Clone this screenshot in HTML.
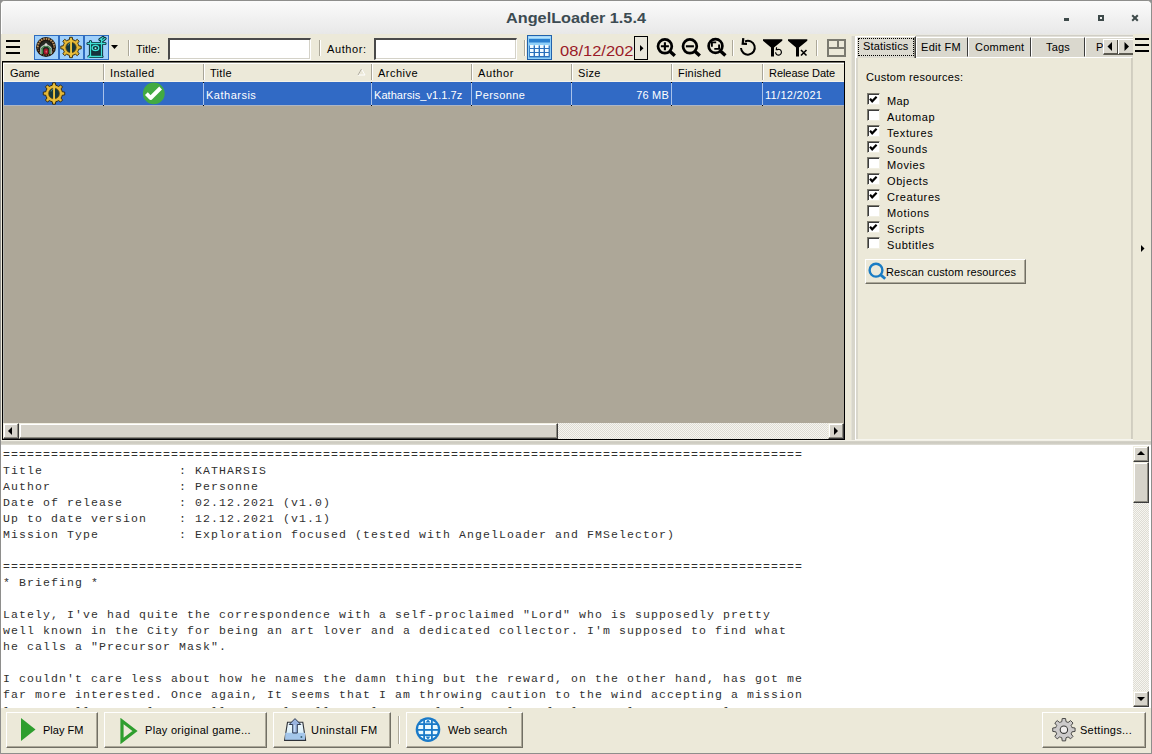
<!DOCTYPE html>
<html><head><meta charset="utf-8">
<style>
*{box-sizing:border-box;margin:0;padding:0}
html,body{width:1152px;height:754px;overflow:hidden;background:#8f8f8f}
body{position:relative;font-family:"Liberation Sans",sans-serif;font-size:11px;color:#000}
.a{position:absolute}
#frame{position:absolute;left:0;top:0;width:1152px;height:754px;background:#ece9d9;border-radius:5px 5px 0 0;border:1px solid #8e8e8c}
#title{position:absolute;left:1px;top:1px;width:1150px;height:33px;background:linear-gradient(#fbfbfb,#e8e8e8);border-radius:4px 4px 0 0;border-left:1px solid #fff}
#title .t{position:absolute;left:-1px;width:1150px;top:9px;text-align:center;font-weight:bold;font-size:14px;color:#3c4b52;transform:scaleX(1.16)}
.sep{position:absolute;width:2px;border-left:1px solid #aca899;border-right:1px solid #fff}
.tb{position:absolute;background:#fff;border-top:2px solid #4a4a4a;border-left:2px solid #4a4a4a;border-right:1px solid #fff;border-bottom:1px solid #fff;box-shadow:inset -1px -1px 0 #d4d2c8}
.ham i{position:absolute;left:0;width:14px;height:2px;background:#000}
.lbl{position:absolute;white-space:nowrap;line-height:13px}
.hd{position:absolute;top:63px;height:18px;line-height:20px;white-space:nowrap;padding-left:6px}
.hdv{position:absolute;top:64px;height:16px;width:1px;background:#a8a598;box-shadow:1px 0 0 #fff}
.cell{position:absolute;top:85px;height:21px;line-height:21px;color:#fff;white-space:nowrap;padding-left:3px}
.vl{position:absolute;top:82px;height:24px;width:1px;background:#a9c2ea;border-top:1px solid #000;border-bottom:1px solid #000}
.btn{position:absolute;background:#ece9d9;border:1px solid;border-color:#fff #716f64 #716f64 #fff;box-shadow:inset -1px -1px 0 #aca899}
.cb{position:absolute;left:867px;width:13px;height:12px;background:#fff;border:1px solid;border-color:#7e7c70 #f1efe2 #f1efe2 #7e7c70;box-shadow:inset 1px 1px 0 #3c3c3c}
.cbl{position:absolute;left:887px;white-space:nowrap;line-height:13px}
.tab{position:absolute;height:20px;background:#dad8ce;border:1px solid;border-color:#fff #3c3c3c transparent #fff;text-align:center;white-space:nowrap;line-height:17px}
.sb{position:absolute;background:#d6d3ca;border:1px solid;border-color:#f1efe2 #3c3c3c #3c3c3c #f1efe2;box-shadow:inset -1px -1px 0 #8c8a80, inset 1px 1px 0 #fff}
.chk{background-image:repeating-conic-gradient(#f6f5f0 0 25%, #dedcd4 0 50%);background-size:2px 2px}
#readme{position:absolute;left:1px;top:445px;width:1150px;height:263px;background:#fff;overflow:hidden}
#readme pre{position:absolute;left:2px;top:2px;font-family:"Liberation Mono",monospace;font-size:11.5px;letter-spacing:1.1px;line-height:16px;color:#303030}
.bb{position:absolute;top:712px;height:36px;background:#ece9d9;border:1px solid;border-color:#fff #716f64 #716f64 #fff;box-shadow:inset -1px -1px 0 #aca899}
.bb span{position:absolute;top:11px;white-space:nowrap;line-height:13px}
</style></head><body>
<div id="frame"></div>
<div id="title"><div class="t">AngelLoader 1.5.4</div>
  <div class="a" style="left:1062px;top:17px;width:5px;height:3px;background:#3e4a4a"></div>
  <div class="a" style="left:1096px;top:14px;width:6px;height:6px;border:2px solid #3e4a4a"></div>
  <svg class="a" style="left:1129px;top:13px" width="8" height="8"><path d="M1.2 1.2L6.8 6.8M6.8 1.2L1.2 6.8" stroke="#3e4a4a" stroke-width="2"/></svg>
</div>

<!-- ================= TOOLBAR ================= -->
<div class="a ham" style="left:6px;top:40px"><i style="top:0"></i><i style="top:6px"></i><i style="top:12px"></i></div>
<div class="a" style="left:34px;top:35px;width:75px;height:25px;background:#9fd0fb;border:1px solid #2f6cc0"></div>
<div class="a" style="left:58px;top:36px;width:2px;height:23px;background:#2f6cc0"></div>
<div class="a" style="left:83px;top:36px;width:2px;height:23px;background:#2f6cc0"></div>
<!-- thief1 medallion -->
<svg class="a" style="left:35px;top:36px" width="23" height="23" viewBox="0 0 23 23">
 <circle cx="11" cy="11" r="10" fill="#1c140e"/>
 <path d="M2.8 11A8.2 8.2 0 0 1 19.2 11" fill="none" stroke="#b8905c" stroke-width="2" stroke-dasharray="1.6 .9"/>
 <path d="M19.2 11A8.2 8.2 0 0 1 2.8 11" fill="none" stroke="#7a5a3a" stroke-width="1.6" stroke-dasharray="1.2 1.2"/>
 <circle cx="11" cy="11.5" r="6.4" fill="#262a24"/>
 <path d="M5.2 18V12Q11 4.5 16.8 12V18H14.6V12.5Q11 8.5 7.4 12.5V18Z" fill="#b4c0bc"/>
 <path d="M6.3 13Q11 7 15.7 13" fill="none" stroke="#3a8040" stroke-width="1.2"/>
 <rect x="6.4" y="13" width="1.5" height="5" fill="#3c8a46"/><rect x="14.1" y="13" width="1.5" height="5" fill="#3c8a46"/>
 <ellipse cx="11" cy="15.6" rx="2.2" ry="3" fill="#a8182a"/>
 <ellipse cx="11.3" cy="15.6" rx=".7" ry="1.2" fill="#d86a78"/>
 <circle cx="11" cy="8.6" r="1.3" fill="#e0dcd8"/>
</svg>
<!-- thief2 gear -->
<svg class="a" style="left:59px;top:36px" width="24" height="23" viewBox="0 0 24 23">
 <path d="M10.33 3.68 L10.66 1.29 L13.34 1.29 L13.67 3.68 L15.06 4.11 L16.35 4.79 L18.28 3.33 L20.17 5.22 L18.71 7.15 L19.39 8.44 L19.82 9.83 L22.21 10.16 L22.21 12.84 L19.82 13.17 L19.39 14.56 L18.71 15.85 L20.17 17.78 L18.28 19.67 L16.35 18.21 L15.06 18.89 L13.67 19.32 L13.34 21.71 L10.66 21.71 L10.33 19.32 L8.94 18.89 L7.65 18.21 L5.72 19.67 L3.83 17.78 L5.29 15.85 L4.61 14.56 L4.18 13.17 L1.79 12.84 L1.79 10.16 L4.18 9.83 L4.61 8.44 L5.29 7.15 L3.83 5.22 L5.72 3.33 L7.65 4.79 L8.94 4.11Z" fill="#e4b838" stroke="#2a2008" stroke-width=".9"/>
 <circle cx="12" cy="11.5" r="5.2" fill="#16383c" stroke="#6a4a08" stroke-width=".7"/>
 <path d="M9 9.5Q9.5 7.5 11 7" stroke="#4a8a90" stroke-width=".9" fill="none"/>
 <rect x="11.1" y="3" width="1.9" height="17" fill="#eac440"/>
</svg>
<!-- thief3 glyph -->
<svg class="a" style="left:84px;top:36px" width="24" height="23" viewBox="0 0 24 23">
 <path d="M6 7H19V19H6Z" fill="#17323e"/>
 <g stroke="#0c2a34" stroke-width="3.2" fill="none" stroke-linecap="round">
 <path d="M4 7.5H21M6.5 5.5V20.5M17.5 3V19M5 20.5H18M16 3.5L19 1.5M18.5 4.5L21 2.5"/>
 <ellipse cx="11.5" cy="12" rx="3.3" ry="2.6"/>
 </g>
 <g stroke="#3fe0d4" stroke-width="1.3" fill="none" stroke-linecap="round">
 <path d="M4 7.5H21M6.5 5.5V20.5M17.5 3V19M5 20.5H18M16 3.5L19 1.5M18.5 4.5L21 2.5M4.5 21.5L6.5 19.5"/>
 <ellipse cx="11.5" cy="12" rx="3.3" ry="2.6"/>
 </g>
 <circle cx="11.5" cy="12.2" r="1" fill="#9ef0e8"/>
</svg>
<svg class="a" style="left:111px;top:45px" width="8" height="5"><path d="M0 0H7L3.5 4Z" fill="#000"/></svg>
<div class="sep" style="left:128px;top:40px;height:16px"></div>
<div class="lbl" style="left:136px;top:43px;letter-spacing:.15px">Title:</div>
<div class="tb" style="left:168px;top:38px;width:143px;height:22px"></div>
<div class="sep" style="left:319px;top:40px;height:16px"></div>
<div class="lbl" style="left:327px;top:43px;letter-spacing:.6px">Author:</div>
<div class="tb" style="left:374px;top:38px;width:143px;height:22px"></div>
<div class="sep" style="left:524px;top:40px;height:16px"></div>
<!-- calendar -->
<svg class="a" style="left:527px;top:35px" width="25" height="25" viewBox="0 0 25 25">
 <rect x=".5" y=".5" width="24" height="24" fill="#8ecff8" stroke="#2262ac"/>
 <rect x="1.5" y="1.5" width="22" height="1.5" fill="#b8e2fb"/>
 <rect x="2" y="4" width="21" height="3.5" fill="#2a80d0"/>
 <rect x="2.2" y="10.6" width="20.6" height="11.8" fill="#2a70bc"/>
 <g fill="#f2fbff">
  <rect x="3" y="10" width="3.6" height="3"/><rect x="8" y="10" width="3.6" height="3"/><rect x="13" y="10" width="3.6" height="3"/><rect x="18" y="10" width="3.6" height="3"/>
  <rect x="3" y="14" width="3.6" height="3"/><rect x="8" y="14" width="3.6" height="3"/><rect x="13" y="14" width="3.6" height="3"/><rect x="18" y="14" width="3.6" height="3"/>
  <rect x="3" y="18" width="3.6" height="3"/><rect x="8" y="18" width="3.6" height="3"/><rect x="13" y="18" width="3.6" height="3"/><rect x="18" y="18" width="3.6" height="3"/>
 </g>
</svg>
<div class="a" style="left:560px;top:42px;width:74px;height:18px;overflow:hidden"><div style="position:absolute;left:0;top:0;white-space:nowrap;font-size:14px;line-height:18px;color:#9a1a28;transform:scaleX(1.18);transform-origin:0 0">08/12/2021</div></div>
<div class="a" style="left:634px;top:36px;width:14px;height:24px;background:#e8e6da;border:1px solid #000"></div>
<svg class="a" style="left:640px;top:45px" width="4" height="7"><path d="M0 0L3.5 3.2L0 6.4Z" fill="#000"/></svg>
<!-- zoom icons -->
<svg class="a" style="left:655px;top:37px" width="24" height="22" viewBox="0 0 24 22">
 <circle cx="9.9" cy="9.3" r="6.9" fill="none" stroke="#000" stroke-width="2.7"/>
 <path d="M14.3 13.8L19.8 18.8" stroke="#000" stroke-width="3.4"/>
 <path d="M9.9 5.3V13.3M5.9 9.3H13.9" stroke="#000" stroke-width="2.1"/>
</svg>
<svg class="a" style="left:680px;top:37px" width="24" height="22" viewBox="0 0 24 22">
 <circle cx="9.9" cy="9.3" r="6.9" fill="none" stroke="#000" stroke-width="2.7"/>
 <path d="M14.3 13.8L19.8 18.8" stroke="#000" stroke-width="3.4"/>
 <path d="M5.9 9.3H13.9" stroke="#000" stroke-width="2.1"/>
</svg>
<svg class="a" style="left:705px;top:37px" width="24" height="22" viewBox="0 0 24 22">
 <circle cx="10.5" cy="9" r="6.9" fill="none" stroke="#000" stroke-width="2.7"/>
 <path d="M14.9 13.5L20.4 18.5" stroke="#000" stroke-width="3.4"/>
 <path d="M6.9 9.8V5.4H11.2M14.1 7.6V11.9H9.3" stroke="#000" stroke-width="1.9" fill="none"/>
</svg>
<div class="sep" style="left:732px;top:40px;height:16px"></div>
<!-- refresh -->
<svg class="a" style="left:739px;top:37px" width="18" height="20" viewBox="0 0 18 20">
 <path d="M6 4.5A6.9 6.9 0 1 1 2 11" fill="none" stroke="#000" stroke-width="2"/>
 <path d="M4.3 1.2L3.7 6.8L8 6.9" fill="none" stroke="#000" stroke-width="2.2"/>
</svg>
<!-- filter refresh -->
<svg class="a" style="left:762px;top:38px" width="22" height="20" viewBox="0 0 22 20">
 <path d="M1 1.2H20.3V2.8L12 9.4V18.6H9V9.4L1 2.8Z" fill="#000"/>
 <path d="M15.27 11.57A2.9 2.9 0 1 1 13.60 14.30" fill="none" stroke="#000" stroke-width="1.2"/>
 <path d="M14.60 9.20L14.30 11.60L16.10 11.70" fill="none" stroke="#000" stroke-width="1.2"/>
</svg>
<!-- filter clear -->
<svg class="a" style="left:787px;top:38px" width="22" height="20" viewBox="0 0 22 20">
 <path d="M1 1.2H20.3V2.8L12 9.4V18.6H9V9.4L1 2.8Z" fill="#000"/>
 <path d="M14 12L19.5 17.5M19.5 12L14 17.5" stroke="#000" stroke-width="1.6"/>
</svg>
<div class="sep" style="left:816px;top:40px;height:16px"></div>
<!-- layout -->
<svg class="a" style="left:827px;top:39px" width="19" height="18" viewBox="0 0 19 18">
 <rect x="1" y="1" width="17" height="16" fill="none" stroke="#7b7a70" stroke-width="2"/>
 <path d="M1 9H18M11 1V9" stroke="#7b7a70" stroke-width="2"/>
</svg>

<!-- ================= GRID ================= -->
<div class="a" style="left:2px;top:61px;width:843px;height:379px;background:#ada798;border:1px solid #000"></div>
<div class="a" style="left:3px;top:62px;width:841px;height:20px;background:#ece9d9;border-top:1px solid #7a786e;box-shadow:inset 0 1px 0 #fff, inset 1px 0 0 #fff;border-bottom:1px solid #f4f2e8"></div>
<div class="hd" style="left:4px;letter-spacing:-.1px">Game</div>
<div class="hd" style="left:104px;letter-spacing:.4px">Installed</div>
<div class="hd" style="left:204px;letter-spacing:.3px">Title</div>
<div class="hd" style="left:372px;letter-spacing:.5px">Archive</div>
<div class="hd" style="left:472px;letter-spacing:.6px">Author</div>
<div class="hd" style="left:572px;letter-spacing:.3px">Size</div>
<div class="hd" style="left:672px;letter-spacing:.2px">Finished</div>
<div class="hd" style="left:763px;letter-spacing:-.05px">Release Date</div>
<div class="hdv" style="left:103px"></div><div class="hdv" style="left:203px"></div><div class="hdv" style="left:371px"></div><div class="hdv" style="left:471px"></div><div class="hdv" style="left:571px"></div><div class="hdv" style="left:671px"></div><div class="hdv" style="left:762px"></div>
<svg class="a" style="left:357px;top:68px" width="9" height="8"><path d="M4.5 1L8 7H1Z" fill="none" stroke="#fff" stroke-width="1"/><path d="M4.5 1L1 7" stroke="#aca899" stroke-width="1"/></svg>
<div class="a" style="left:4px;top:82px;width:840px;height:23px;background:#316ac5"></div>
<div class="a" style="left:3px;top:105px;width:841px;height:1px;background:#aeb6c4"></div>
<div class="a" style="left:3px;top:82px;width:1px;height:341px;background:#b6b8b2"></div>
<div class="vl" style="left:103px"></div><div class="vl" style="left:203px"></div><div class="vl" style="left:371px"></div><div class="vl" style="left:471px"></div><div class="vl" style="left:571px"></div><div class="vl" style="left:671px"></div><div class="vl" style="left:762px"></div>
<svg class="a" style="left:42px;top:82px" width="24" height="23" viewBox="0 0 24 23">
 <path d="M10.25 3.28 L10.60 0.79 L13.40 0.79 L13.75 3.28 L15.21 3.74 L16.57 4.45 L18.58 2.94 L20.56 4.92 L19.05 6.93 L19.76 8.29 L20.22 9.75 L22.71 10.10 L22.71 12.90 L20.22 13.25 L19.76 14.71 L19.05 16.07 L20.56 18.08 L18.58 20.06 L16.57 18.55 L15.21 19.26 L13.75 19.72 L13.40 22.21 L10.60 22.21 L10.25 19.72 L8.79 19.26 L7.43 18.55 L5.42 20.06 L3.44 18.08 L4.95 16.07 L4.24 14.71 L3.78 13.25 L1.29 12.90 L1.29 10.10 L3.78 9.75 L4.24 8.29 L4.95 6.93 L3.44 4.92 L5.42 2.94 L7.43 4.45 L8.79 3.74Z" fill="#e4b838" stroke="#2a2008" stroke-width=".9"/>
 <circle cx="12" cy="11.5" r="5.4" fill="#16383c" stroke="#6a4a08" stroke-width=".7"/>
 <path d="M9 9.5Q9.5 7.5 11 7" stroke="#4a8a90" stroke-width=".9" fill="none"/>
 <rect x="11.1" y="2.5" width="1.9" height="18" fill="#eac440"/>
</svg>
<svg class="a" style="left:142px;top:82px" width="24" height="23" viewBox="0 0 24 23">
 <circle cx="11.8" cy="11.4" r="10.9" fill="#42aa42"/>
 <path d="M4.4 11.6L8.6 16L18.6 6" fill="none" stroke="#fff" stroke-width="3.9" stroke-linejoin="round"/>
</svg>
<div class="cell" style="left:203px;letter-spacing:.5px">Katharsis</div>
<div class="cell" style="left:371px;letter-spacing:.05px">Katharsis_v1.1.7z</div>
<div class="cell" style="left:472px;letter-spacing:.4px">Personne</div>
<div class="cell" style="left:572px;width:97px;text-align:right;letter-spacing:.2px">76 MB</div>
<div class="cell" style="left:762px;letter-spacing:.3px">11/12/2021</div>
<!-- h scrollbar -->
<div class="a chk" style="left:3px;top:423px;width:841px;height:16px"></div>
<div class="sb" style="left:3px;top:423px;width:16px;height:16px"></div>
<svg class="a" style="left:8px;top:427px" width="5" height="8"><path d="M4 0L0 4L4 8Z" fill="#000"/></svg>
<div class="sb" style="left:19px;top:423px;width:539px;height:16px"></div>
<div class="sb" style="left:828px;top:423px;width:16px;height:16px"></div>
<svg class="a" style="left:834px;top:427px" width="5" height="8"><path d="M0 0L4 4L0 8Z" fill="#000"/></svg>

<!-- ================= RIGHT PANEL ================= -->
<div class="a" style="left:851px;top:36px;width:5px;height:405px;background:#d7d5ca;border-left:1px solid #e2e0d6;border-right:1px solid #fff"></div>
<div class="a" style="left:856px;top:57px;width:277px;height:384px;background:#ece9d9;border:1px solid;border-color:#fff #d3d0c2 #d3d0c2 #d9d7cc;border-left-width:2px"></div>
<div class="a" style="left:1131px;top:58px;width:1px;height:381px;background:#d0cdc0"></div>
<div class="a" style="left:856px;top:439px;width:277px;height:1px;background:#f6f5ee"></div>
<div class="a" style="left:856px;top:440px;width:277px;height:1px;background:#8e8c80"></div>
<div class="a" style="left:916px;top:34px;width:217px;height:3px;background:linear-gradient(#e9e8e2 0,#e9e8e2 1px,#d0cec6 1px,#d0cec6 2px,#e2e0d8 2px)"></div>
<div class="tab" style="left:916px;top:37px;width:52px"></div><div class="lbl" style="left:921px;top:41px;letter-spacing:.3px">Edit FM</div>
<div class="tab" style="left:968px;top:37px;width:63px"></div><div class="lbl" style="left:975px;top:41px;letter-spacing:.25px">Comment</div>
<div class="tab" style="left:1031px;top:37px;width:54px"></div><div class="lbl" style="left:1046px;top:41px;letter-spacing:.2px">Tags</div>
<div class="tab" style="left:1085px;top:37px;width:48px;border-right:none"></div><div class="lbl" style="left:1096px;top:41px">Pa</div>
<div class="tab" style="left:856px;top:36px;width:60px;height:22px;border-bottom:none;background:#dcdad0;box-shadow:inset -1px 0 0 #8a887c"></div>
<div class="lbl" style="left:863px;top:40px;letter-spacing:.15px">Statistics</div>
<div class="a" style="left:858px;top:38px;width:56px;height:18px;border:1px dotted #000"></div>
<div class="a" style="left:1103px;top:39px;width:30px;height:16px;background:#dcd9cf;border-top:1px solid #fff;border-left:1px solid #fff;border-bottom:2px solid #5c5a50"></div>
<div class="a" style="left:1117px;top:40px;width:2px;height:14px;background:#4a4840;border-right:1px solid #fff"></div>
<svg class="a" style="left:1107px;top:42px" width="6" height="9"><path d="M5 0L0.5 4.5L5 9Z" fill="#000"/></svg>
<svg class="a" style="left:1124px;top:42px" width="6" height="9"><path d="M0.5 0L5 4.5L0.5 9Z" fill="#000"/></svg>
<div class="a ham" style="left:1135px;top:38px"><i style="top:0"></i><i style="top:6px"></i><i style="top:12px"></i></div>
<svg class="a" style="left:1141px;top:245px" width="4" height="7"><path d="M0 0L3.5 3.5L0 7Z" fill="#000"/></svg>

<div class="lbl" style="left:866px;top:71px;letter-spacing:.3px">Custom resources:</div>
<div class="cb" style="top:93px"></div><div class="cbl" style="top:95px;letter-spacing:.3px">Map</div>
<div class="cb" style="top:109px"></div><div class="cbl" style="top:111px;letter-spacing:.6px">Automap</div>
<div class="cb" style="top:125px"></div><div class="cbl" style="top:127px;letter-spacing:.6px">Textures</div>
<div class="cb" style="top:141px"></div><div class="cbl" style="top:143px;letter-spacing:.6px">Sounds</div>
<div class="cb" style="top:157px"></div><div class="cbl" style="top:159px;letter-spacing:.6px">Movies</div>
<div class="cb" style="top:173px"></div><div class="cbl" style="top:175px;letter-spacing:.6px">Objects</div>
<div class="cb" style="top:189px"></div><div class="cbl" style="top:191px;letter-spacing:.6px">Creatures</div>
<div class="cb" style="top:205px"></div><div class="cbl" style="top:207px;letter-spacing:.6px">Motions</div>
<div class="cb" style="top:221px"></div><div class="cbl" style="top:223px;letter-spacing:.6px">Scripts</div>
<div class="cb" style="top:237px"></div><div class="cbl" style="top:239px;letter-spacing:.6px">Subtitles</div>
<svg class="a" style="left:867px;top:93px" width="13" height="160" viewBox="0 0 13 160">
 <g fill="none" stroke="#000" stroke-width="2.2">
  <path d="M3 5.8L5.2 8.3L9.6 3.8"/>
  <path d="M3 37.8L5.2 40.3L9.6 35.8"/>
  <path d="M3 53.8L5.2 56.3L9.6 51.8"/>
  <path d="M3 85.8L5.2 88.3L9.6 83.8"/>
  <path d="M3 101.8L5.2 104.3L9.6 99.8"/>
  <path d="M3 133.8L5.2 136.3L9.6 131.8"/>
 </g>
</svg>
<div class="btn" style="left:865px;top:259px;width:161px;height:25px"></div>
<svg class="a" style="left:867px;top:262px" width="20" height="19" viewBox="0 0 20 19">
 <circle cx="9" cy="8.2" r="6.4" fill="none" stroke="#1a7cc4" stroke-width="2.4"/>
 <path d="M13.4 12.6L18.2 16.8" stroke="#1a7cc4" stroke-width="2.8"/>
</svg>
<div class="lbl" style="left:886px;top:266px;letter-spacing:.13px">Rescan custom resources</div>

<!-- ================= README ================= -->
<div class="a" style="left:1px;top:440px;width:1150px;height:5px;background:linear-gradient(#f2f0e6 0,#f2f0e6 1px,#d6d4ca 1px,#cbc9be 3px,#e2e1da 5px)"></div>
<div id="readme"><pre>====================================================================================================
Title                 : KATHARSIS
Author                : Personne
Date of release       : 02.12.2021 (v1.0)
Up to date version    : 12.12.2021 (v1.1)
Mission Type          : Exploration focused (tested with AngelLoader and FMSelector)

====================================================================================================
* Briefing *

Lately, I've had quite the correspondence with a self-proclaimed "Lord" who is supposedly pretty
well known in the City for being an art lover and a dedicated collector. I'm supposed to find what
he calls a "Precursor Mask".

I couldn't care less about how he names the damn thing but the reward, on the other hand, has got me
far more interested. Once again, It seems that I am throwing caution to the wind accepting a mission
</pre><pre style="top:259px">l        ll       l       ll       l   ll     l       l  l     l    l  l      l           l</pre></div>
<div class="a chk" style="left:1133px;top:446px;width:16px;height:261px"></div>
<div class="sb" style="left:1133px;top:446px;width:16px;height:16px"></div>
<svg class="a" style="left:1137px;top:451px" width="8" height="5"><path d="M0 4L4 0L8 4Z" fill="#000"/></svg>
<div class="sb" style="left:1133px;top:462px;width:16px;height:41px"></div>
<div class="sb" style="left:1133px;top:691px;width:16px;height:16px"></div>
<svg class="a" style="left:1137px;top:697px" width="8" height="5"><path d="M0 0L8 0L4 4Z" fill="#000"/></svg>

<!-- ================= BOTTOM BAR ================= -->
<div class="bb" style="left:6px;width:92px"><span style="left:36px">Play FM</span></div>
<svg class="a" style="left:21px;top:718px" width="15" height="23"><path d="M0 0L14.5 11.5L0 23Z" fill="#2e9e2e"/></svg>
<div class="bb" style="left:104px;width:163px"><span style="left:40px;letter-spacing:.3px">Play original game...</span></div>
<svg class="a" style="left:120px;top:718px" width="18" height="26"><path d="M2 3L15 13L2 23Z" fill="none" stroke="#2e9e2e" stroke-width="3.2" stroke-linejoin="miter"/></svg>
<div class="bb" style="left:273px;width:118px"><span style="left:37px;letter-spacing:.45px">Uninstall FM</span></div>
<svg class="a" style="left:284px;top:718px" width="23" height="24" viewBox="0 0 23 24">
 <defs><linearGradient id="tg" x1="0" y1="0" x2="0" y2="1"><stop offset="0" stop-color="#f4fbff"/><stop offset="1" stop-color="#c8e6f4"/></linearGradient></defs>
 <path d="M3.5 4.3H18.8L21.6 22.4H.6Z" fill="url(#tg)" stroke="#2e3238" stroke-width="1.1"/>
 <rect x="1.2" y="14.8" width="19.8" height="7.2" fill="#a4c6ea"/>
 <path d="M.6 22.4H21.6" stroke="#2e3238" stroke-width="1.2"/>
 <path d="M11 .6L16.8 6.5H13.3V15H8.7V6.5H5.2Z" fill="#9ab4e0" stroke="#2e3a50" stroke-width="1"/>
 <rect x="9.7" y="7" width="1.6" height="7" fill="#c8dcf4"/>
 <rect x="16.6" y="18.2" width="1.6" height="1.6" fill="#2a5a6a"/>
</svg>
<div class="sep" style="left:398px;top:716px;height:28px"></div>
<div class="bb" style="left:406px;width:117px"><span style="left:41px;letter-spacing:.07px">Web search</span></div>
<svg class="a" style="left:415px;top:717px" width="26" height="26" viewBox="0 0 26 26">
 <defs><clipPath id="gc"><circle cx="13" cy="12.6" r="10"/></clipPath></defs>
 <circle cx="13" cy="12.6" r="12.3" fill="#1a7ac8"/>
 <g clip-path="url(#gc)" fill="#eafaff">
  <rect x="2" y="2" width="6.2" height="4.2"/><rect x="10" y="2" width="6" height="4.2"/><rect x="17.8" y="2" width="6.2" height="4.2"/>
  <rect x="2" y="8" width="6.2" height="4"/><rect x="10" y="8" width="6" height="4"/><rect x="17.8" y="8" width="6.2" height="4"/>
  <rect x="2" y="13.8" width="6.2" height="3.4"/><rect x="10" y="13.8" width="6" height="3.4"/><rect x="17.8" y="13.8" width="6.2" height="3.4"/>
  <rect x="2" y="19" width="6.2" height="5"/><rect x="10" y="19" width="6" height="5"/><rect x="17.8" y="19" width="6.2" height="5"/>
 </g>
 <path d="M13 2.5L15.5 5.5H10.5Z M13 22.5L15.5 19.5H10.5Z" fill="#1a7ac8"/>
</svg>
<div class="bb" style="left:1042px;width:104px"><span style="left:37px;letter-spacing:.28px">Settings...</span></div>
<svg class="a" style="left:1051px;top:718px" width="26" height="24" viewBox="0 0 26 24">
 <path d="M10.77 3.68 L11.21 0.53 L14.59 0.53 L15.03 3.68 L16.08 4.03 L17.06 4.52 L19.61 2.61 L21.99 4.99 L20.08 7.54 L20.57 8.52 L20.92 9.57 L24.07 10.01 L24.07 13.39 L20.92 13.83 L20.57 14.88 L20.08 15.86 L21.99 18.41 L19.61 20.79 L17.06 18.88 L16.08 19.37 L15.03 19.72 L14.59 22.87 L11.21 22.87 L10.77 19.72 L9.72 19.37 L8.74 18.88 L6.19 20.79 L3.81 18.41 L5.72 15.86 L5.23 14.88 L4.88 13.83 L1.73 13.39 L1.73 10.01 L4.88 9.57 L5.23 8.52 L5.72 7.54 L3.81 4.99 L6.19 2.61 L8.74 4.52 L9.72 4.03Z" fill="#cdcbcb" stroke="#4a4a48" stroke-width="1"/>
 <circle cx="12.9" cy="11.7" r="3.7" fill="#efedec" stroke="#3a3a38" stroke-width="1.1"/>
</svg>
</body></html>
